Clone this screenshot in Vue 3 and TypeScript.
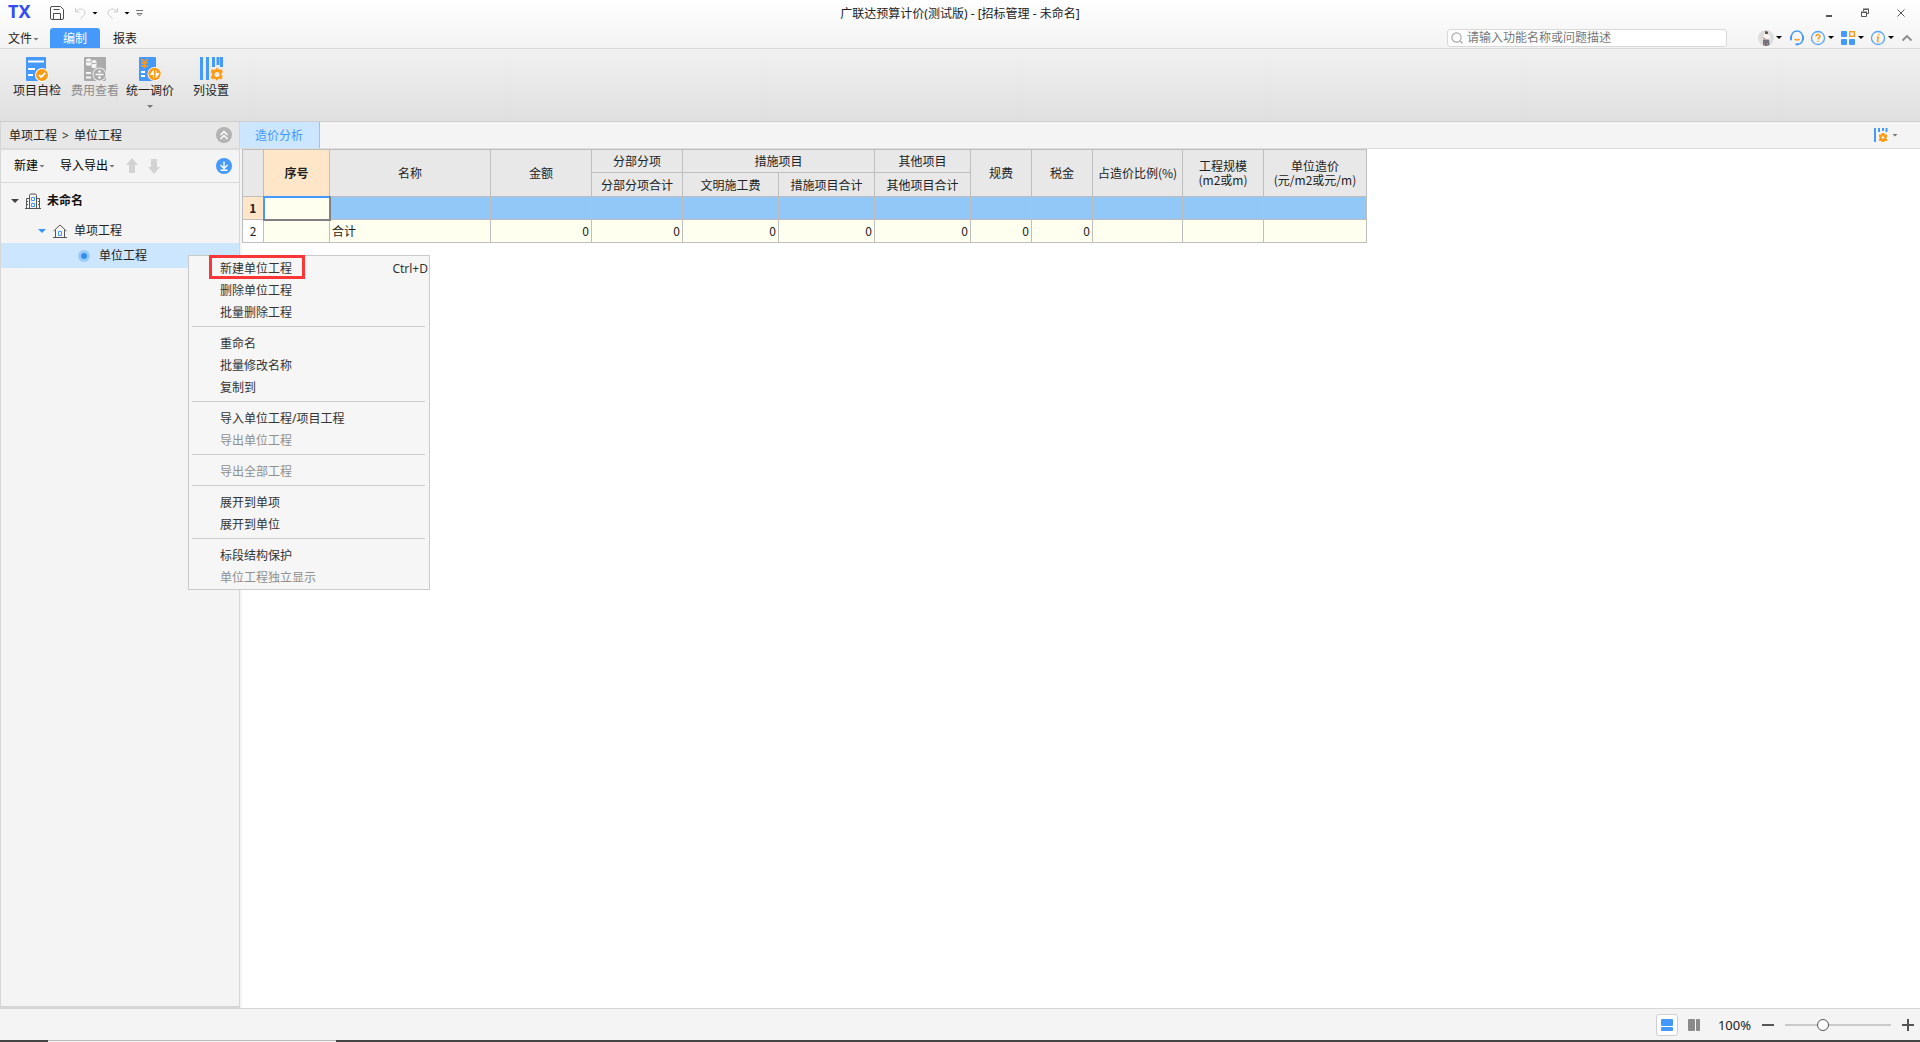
<script setup lang="ts">
import { ref } from 'vue'

interface MenuItem {
  label: string
  shortcut?: string
  disabled?: boolean
  marked?: boolean
}

const menuGroups: MenuItem[][] = [
  [
    { label: '新建单位工程', shortcut: 'Ctrl+D', marked: true },
    { label: '删除单位工程' },
    { label: '批量删除工程' },
  ],
  [{ label: '重命名' }, { label: '批量修改名称' }, { label: '复制到' }],
  [{ label: '导入单位工程/项目工程' }, { label: '导出单位工程', disabled: true }],
  [{ label: '导出全部工程', disabled: true }],
  [{ label: '展开到单项' }, { label: '展开到单位' }],
  [{ label: '标段结构保护' }, { label: '单位工程独立显示', disabled: true }],
]

const columnWidths: number[] = [21, 66, 161, 101, 91, 96, 96, 96, 61, 61, 90, 81, 103]
const totals: string[] = ['', '合计', '0', '0', '0', '0', '0', '0', '0', '', '', '']
const keyword = ref('')
const zoom = ref(34)
</script>

<template>
  <div class="app">
    <header class="top">
      <div class="title-row">
        <div class="quick">
          <span class="logo">TX</span>
          <button class="icon-btn save" aria-label="保存">
            <svg width="14" height="14" viewBox="0 0 14 14" fill="none" stroke="#4a4a4a">
              <path d="M2 .5h8.500l3 3V12a1.500 1.500 0 0 1-1.500 1.500H2A1.500 1.500 0 0 1 .5 12V2A1.500 1.500 0 0 1 2 .5zM3.500 13.500v-6h7v6M3.500 3.500h6" />
            </svg>
          </button>
          <button class="icon-btn undo" aria-label="撤销">
            <svg width="12" height="12" viewBox="0 0 12 12" fill="none" stroke="#cdcdcd">
              <path d="M1.500 1v4h4M1.500 5C4 1 10.500 1 11 5.500c0 3-2.500 3.500-4.500 6" />
            </svg>
          </button>
          <i class="tri black"></i>
          <button class="icon-btn redo" aria-label="恢复">
            <svg width="12" height="12" viewBox="0 0 12 12" fill="none" stroke="#cdcdcd">
              <path d="M10.500 1v4h-4M10.500 5C8 1 1.500 1 1 5.500c0 3 2.500 3.500 4.500 6" />
            </svg>
          </button>
          <i class="tri black"></i>
          <button class="icon-btn more" aria-label="自定义">
            <svg width="7" height="8" viewBox="0 0 7 8" fill="none" stroke="#777">
              <path d="M0 1.500h7M1 4.500l2.500 2.500L6 4.500z" />
            </svg>
          </button>
        </div>
        <h1 class="title">广联达预算计价(测试版) - [招标管理 - 未命名]</h1>
        <div class="window-btns">
          <button class="icon-btn" aria-label="最小化">
            <svg width="12" height="12" viewBox="0 0 12 12"><path d="M3 8h6v2H3z" fill="#555" /></svg>
          </button>
          <button class="icon-btn" aria-label="还原">
            <svg width="12" height="12" viewBox="0 0 12 12" fill="none" stroke="#555">
              <path d="M2.500 5.500h5v4h-5zM2 5h6M4.500 4V2.500h5v4H8M4 2h6" />
            </svg>
          </button>
          <button class="icon-btn" aria-label="关闭">
            <svg width="12" height="12" viewBox="0 0 12 12" stroke="#555"><path d="M2.500 2.500l7 7M9.500 2.500l-7 7" /></svg>
          </button>
        </div>
      </div>
      <div class="tab-row">
        <nav class="tabs">
          <button class="tab file">文件<i class="tri grey"></i></button>
          <button class="tab active">编制</button>
          <button class="tab report">报表</button>
        </nav>
        <div class="tools">
          <label class="search">
            <svg width="12" height="12" viewBox="0 0 12 12" fill="none" stroke="#aaa" stroke-width="1.200">
              <circle cx="5.500" cy="5.500" r="4.600" /><path d="M9 9l2.500 2.500" />
            </svg>
            <input v-model="keyword" type="text" aria-label="搜索" placeholder="请输入功能名称或问题描述" />
          </label>
          <button class="tool" aria-label="账户">
            <svg width="16" height="16" viewBox="0 0 16 16">
              <circle cx="8" cy="8" r="8" fill="#dedede" />
              <path d="M7 1.500h3v3l2 1.500v4l-1 .5H6L4 8l2-3z" fill="#f8f3f1" />
              <path d="M7 1.500q1.500-1 3 .5v2H7z" fill="#6b5248" />
              <path d="M5 9.500h6l.5 5.500q-4 2-6.500 0z" fill="#70707e" />
              <path d="M4.500 7.500l3 1.500M6.500 15v-2M9.500 15v-2" stroke="#b08878" />
            </svg>
            <i class="tri black"></i>
          </button>
          <button class="tool" aria-label="客服">
            <svg width="16" height="16" viewBox="0 0 16 16" fill="none" stroke="#4499fb" stroke-width="1.400">
              <path d="M3.500 6.500a5.500 5.500 0 0 1 11 0M14.500 9.500c0 3-2 4.500-5 4.700" />
              <path d="M3 6.500v3M15 6.500v3" stroke-width="2" stroke-linecap="round" />
              <path d="M7.500 14.300h3" stroke-width="2" />
              <path d="M6.500 9q2.500 2 5 0" stroke="#ff9a1f" />
            </svg>
          </button>
          <button class="tool" aria-label="帮助">
            <svg width="16" height="16" viewBox="0 0 16 16" fill="none" stroke="#58a4fb" stroke-width="1.300">
              <circle cx="8" cy="8" r="6.500" />
              <path d="M6 6.500C6 4 10 4 10 6.300 10 7.700 8 7.700 8 9.500M8 10.800V12" stroke="#ff9a1f" stroke-width="1.500" />
            </svg>
            <i class="tri black"></i>
          </button>
          <button class="tool" aria-label="应用">
            <svg width="16" height="16" viewBox="0 0 16 16" fill="#4499fb">
              <rect x="1" y="1" width="6" height="6" rx="1" /><rect x="1" y="9" width="6" height="6" rx="1" />
              <rect x="9" y="9" width="6" height="6" rx="1" />
              <rect x="9.700" y="1.700" width="4.600" height="4.600" fill="none" stroke="#ff9a1f" stroke-width="1.400" />
            </svg>
            <i class="tri black"></i>
          </button>
          <button class="tool" aria-label="关于">
            <svg width="16" height="16" viewBox="0 0 16 16" fill="none" stroke="#58a4fb" stroke-width="1.300">
              <circle cx="8" cy="8" r="6.500" />
              <path d="M9 3.800L8.700 5.300M8.300 6.700L7.400 11.800M6.800 6.900h1.500M7.300 11.800h1.400" stroke="#ff9a1f" stroke-width="1.500" />
            </svg>
            <i class="tri black"></i>
          </button>
          <button class="tool fold" aria-label="收起功能区">
            <svg width="14" height="10" viewBox="0 0 14 10" fill="none" stroke="#8a8a8a" stroke-width="1.800"><path d="M2.500 7.500L7 3l4.500 4.500" /></svg>
          </button>
        </div>
      </div>
    </header>

    <section class="ribbon">
      <button class="cmd">
        <svg width="24" height="26" viewBox="0 0 24 26">
          <path d="M2 1h18v24H2a1 1 0 0 1-1-1V2a1 1 0 0 1 1-1zM20 1a1 1 0 0 1 1 1v22h-1z" fill="#4499fb" />
          <path d="M3 5.500h16M3 13h7M3 19h5" stroke="#fff" stroke-width="2" />
          <circle cx="17" cy="19" r="7" fill="#fff" /><circle cx="17" cy="19" r="6" fill="#ff9a12" />
          <path d="M14 19l2.200 2.200 4-4.400" fill="none" stroke="#fff" stroke-width="1.800" />
        </svg>
        <span>项目自检</span>
      </button>
      <button class="cmd" disabled>
        <svg width="24" height="26" viewBox="0 0 24 26">
          <rect x="1" y="1" width="22" height="24" rx="1" fill="#ababab" />
          <path d="M3 3.500q3-2 5 0V9q-2 1.500-5 0zM8.500 5q3-2 5 0v6.500q-2.500 1.500-5 0z" fill="#f5f5f5" />
          <path d="M3 17h5M3 21.500h5" stroke="#f5f5f5" stroke-width="2" />
          <path d="M3 5.500q2.500 1.200 5 0M8.500 7q2.500 1.200 5 0" stroke="#ababab" fill="none" />
          <circle cx="16.500" cy="18.500" r="7" fill="#eee" /><circle cx="16.500" cy="18.500" r="6" fill="#ababab" />
          <path d="M12.500 18.500h8" stroke="#fff" stroke-width="1.500" /><circle cx="16.500" cy="15.500" r="1.200" fill="#fff" /><circle cx="16.500" cy="21.500" r="1.200" fill="#fff" />
        </svg>
        <span>费用查看</span>
      </button>
      <button class="cmd narrow">
        <svg width="24" height="26" viewBox="0 0 24 26">
          <rect x="1" y="1" width="17" height="24" rx="1" fill="#4499fb" />
          <path d="M3.500 3l3 3.500 3-3.500M3 7h7M3 10h7M6.500 6v6" fill="none" stroke="#ff9a12" stroke-width="1.600" />
          <path d="M3 16h4M3 20h4" stroke="#fff" stroke-width="2" />
          <circle cx="16.500" cy="18" r="7" fill="#fff" /><circle cx="16.500" cy="18" r="6.200" fill="#ff9a12" />
          <path d="M15.500 14.500v7M15.500 14.500l-3 4h3M18 21.500v-7M18 21.500l3-4h-3" fill="#fff" stroke="#fff" />
        </svg>
        <span>统一调价</span>
        <i class="tri grey"></i>
      </button>
      <button class="cmd wide">
        <svg width="24" height="26" viewBox="0 0 24 26">
          <path d="M2.500 1v23M8.500 1v23M14.500 1v10M19 1v8M22.500 1v10" stroke="#4499fb" stroke-width="3" />
          <path d="M18 11.500l2 2 3-.5 1 3-1.500 2 1.500 3-1.500 2.500-3-.5-1.500 2-2-2-3 .5L11.500 21l1.500-2.500-1.500-3 1.500-2.500 3 .5z" fill="#ff9a12" stroke="#eee" stroke-width=".5" />
          <circle cx="18" cy="18.500" r="2.500" fill="#eee" />
        </svg>
        <span>列设置</span>
      </button>
    </section>

    <main class="body">
      <aside class="side">
        <div class="crumb">
          <span class="path"><span>单项工程</span><span>&gt;</span><span>单位工程</span></span>
          <button class="icon-btn" aria-label="收起">
            <svg width="16" height="16" viewBox="0 0 16 16" fill="none" stroke="#fff" stroke-width="1.500">
              <circle cx="8" cy="8" r="8" fill="#b3b3b3" stroke="none" /><path d="M4.500 8L8 4.500 11.500 8M4.500 12L8 8.500l3.500 3.500" />
            </svg>
          </button>
        </div>
        <div class="side-tools">
          <button class="text-btn">新建<i class="tri grey"></i></button>
          <button class="text-btn">导入导出<i class="tri grey"></i></button>
          <button class="icon-btn arrow" aria-label="上移">
            <svg width="12" height="16" viewBox="0 0 12 16" fill="#d3d3d3"><path d="M6 0l6 7H9v8H3V7H0z" /></svg>
          </button>
          <button class="icon-btn arrow" aria-label="下移">
            <svg width="12" height="16" viewBox="0 0 12 16" fill="#d3d3d3"><path d="M6 16L0 9h3V1h6v8h3z" /></svg>
          </button>
          <button class="icon-btn load" aria-label="下载">
            <svg width="16" height="16" viewBox="0 0 16 16" fill="none" stroke="#fff" stroke-width="1.400">
              <circle cx="8" cy="8" r="8" fill="#4499fb" stroke="none" /><path d="M8 3.500V10M4.500 7L8 10.500 11.500 7M4.500 12.300h7" />
            </svg>
          </button>
        </div>
        <ul class="tree">
          <li class="node root">
            <i class="tri big"></i>
            <svg width="16" height="16" viewBox="0 0 16 16" fill="none" stroke="#555">
              <path d="M4.500 15V2.500q0-1.500 1.500-1.500h4q1.500 0 1.500 1.500V15M4 5.500H1.500v10M12 5.500h2.500v10M0 15.500h16M2 8.500h1M2 11.500h1M13 8.500h1M13 11.500h1" />
              <path d="M6.500 4.500h3v3h-3zM6.500 10.500h3v3h-3z" stroke="#4499fb" />
            </svg>
            <span>未命名</span>
          </li>
          <li class="node group">
            <i class="tri big blue"></i>
            <svg width="14" height="14" viewBox="0 0 14 14" fill="none" stroke="#555">
              <path d="M.5 7L7 1l6.500 6M2.500 6v7.500M11.500 6v7.500M0 13.500h14" /><path d="M5.500 7.500h3v4h-3z" stroke="#4499fb" />
            </svg>
            <span>单项工程</span>
          </li>
          <li class="node leaf">
            <svg width="12" height="12" viewBox="0 0 12 12"><circle cx="6" cy="6" r="6" fill="#9acbfa" /><circle cx="6" cy="6" r="3" fill="#318ff2" /></svg>
            <span>单位工程</span>
          </li>
        </ul>
      </aside>

      <section class="content">
        <div class="sheet-tabs">
          <button class="sheet-tab">造价分析</button>
          <button class="icon-btn columns" aria-label="列设置">
            <svg width="14" height="16" viewBox="0 0 14 16">
              <path d="M1 1v14M5 1v4M9 1v3M12.500 1v4" stroke="#4499fb" stroke-width="2" />
              <path d="M7.500 6h3v1.500H13v3h-1v1h1v2.500h-2.500v1h-3v-1H5v-2.500h1v-1H5v-3h2.500z" fill="#ff9a12" /><circle cx="9" cy="10.500" r="1.200" fill="#fff" />
            </svg>
            <i class="tri grey"></i>
          </button>
        </div>
        <div class="sheet">
          <table class="grid">
            <colgroup><col v-for="(w, i) in columnWidths" :key="i" :style="{ width: w + 'px' }" /></colgroup>
            <thead>
              <tr>
                <th rowspan="2"></th>
                <th rowspan="2" class="current">序号</th>
                <th rowspan="2">名称</th>
                <th rowspan="2">金额</th>
                <th>分部分项</th>
                <th colspan="2">措施项目</th>
                <th>其他项目</th>
                <th rowspan="2">规费</th>
                <th rowspan="2">税金</th>
                <th rowspan="2">占造价比例(%)</th>
                <th rowspan="2">工程规模<br />(m2或m)</th>
                <th rowspan="2">单位造价<br />(元/m2或元/m)</th>
              </tr>
              <tr class="sub">
                <th>分部分项合计</th>
                <th>文明施工费</th>
                <th>措施项目合计</th>
                <th>其他项目合计</th>
              </tr>
            </thead>
            <tbody>
              <tr class="picked">
                <th class="current">1</th>
                <td class="cursor"></td>
                <td v-for="n in 11" :key="n"></td>
              </tr>
              <tr>
                <th class="num">2</th>
                <td v-for="(v, i) in totals" :key="i" :class="{ left: i === 1 }">{{ v }}</td>
              </tr>
            </tbody>
          </table>
        </div>
      </section>

      <div class="menu" role="menu">
        <div v-for="(group, g) in menuGroups" :key="g" class="menu-group">
          <button
            v-for="item in group"
            :key="item.label"
            class="menu-item"
            :class="{ marked: item.marked }"
            role="menuitem"
            :disabled="item.disabled"
          >
            <span>{{ item.label }}</span>
            <span v-if="item.shortcut">{{ item.shortcut }}</span>
          </button>
        </div>
      </div>
    </main>

    <footer class="status">
      <button class="view on" aria-label="上下视图">
        <svg width="12" height="12" viewBox="0 0 12 12" fill="#4499fb"><rect width="12" height="7" rx="1" /><rect y="8" width="12" height="4" rx="1" /></svg>
      </button>
      <button class="view" aria-label="左右视图">
        <svg width="12" height="12" viewBox="0 0 12 12" fill="#8a8a8a"><rect width="7" height="12" rx="1" /><rect x="8" width="4" height="12" rx="1" /></svg>
      </button>
      <span class="percent">100%</span>
      <button class="icon-btn" aria-label="缩小">
        <svg width="12" height="12" viewBox="0 0 12 12"><path d="M0 5h12v2H0z" fill="#555" /></svg>
      </button>
      <input v-model="zoom" class="slider" type="range" min="0" max="100" aria-label="缩放" />
      <button class="icon-btn" aria-label="放大">
        <svg width="12" height="12" viewBox="0 0 12 12"><path d="M0 5h5V0h2v5h5v2H7v5H5V7H0z" fill="#555" /></svg>
      </button>
    </footer>
    <div class="taskbar"><i></i></div>
  </div>
</template>

<style>
body {
  margin: 0;
}
</style>

<style scoped>
.app {
  display: flex;
  flex-direction: column;
  min-height: 100vh;
  background: #f4f4f4;
  color: #222;
  font: 12px/18px 'Noto Sans', 'Noto Sans CJK SC', sans-serif;
}
.app *,
.app *::before,
.app *::after {
  box-sizing: border-box;
}
button {
  display: flex;
  align-items: center;
  padding: 0;
  border: 0;
  background: none;
  color: inherit;
  font: inherit;
  white-space: nowrap;
}
svg {
  display: block;
  flex: none;
}
.tri {
  flex: none;
  width: 6px;
  height: 3px;
  background: #777;
  clip-path: polygon(0 0, 100% 0, 50% 100%);
}
.tri.black {
  background: #000;
}
.tri.big {
  width: 8px;
  height: 4px;
  background: #444;
}
.tri.blue {
  background: #3b93fa;
}

.top {
  background: linear-gradient(#fff, #f3f3f3);
  border-bottom: 1px solid #d9d9d9;
}
.title-row {
  display: grid;
  grid-template-columns: 1fr auto 1fr;
  align-items: center;
  height: 26px;
}
.quick {
  display: flex;
  align-items: center;
  height: 24px;
  padding-left: 8px;
}
.logo {
  width: 42px;
  height: 22px;
  color: #344cf5;
  font: bold 18px/18px 'Noto Sans', sans-serif;
}
.undo {
  margin: 0 6px 0 10px;
}
.redo {
  margin: 0 5px 0 9px;
}
.more {
  margin-left: 6px;
}
.title {
  margin: 0;
  padding-top: 2px;
  font-size: 12px;
  font-weight: normal;
}
.window-btns {
  display: flex;
  justify-content: flex-end;
  gap: 24px;
  padding-right: 13px;
}
.tab-row {
  display: flex;
  align-items: flex-end;
  justify-content: space-between;
  height: 22px;
}
.tabs {
  display: flex;
}
.tab {
  justify-content: center;
  width: 50px;
  height: 20px;
  padding-top: 2px;
}
.tab.file {
  justify-content: flex-start;
  gap: 1px;
  padding-left: 8px;
}
.tab.active {
  border-radius: 3px 3px 0 0;
  background: #4499fb;
  color: #fff;
}
.tools {
  display: flex;
  align-items: center;
  gap: 6px;
  height: 22px;
  padding: 1px 6px 0 0;
}
.search {
  display: flex;
  align-items: center;
  gap: 4px;
  width: 280px;
  height: 18px;
  margin-right: 25px;
  padding-left: 3px;
  border: 1px solid #d9d9d9;
  border-radius: 3px;
  background: #fff;
}
.search input {
  flex: 1;
  min-width: 0;
  height: 16px;
  padding: 0;
  border: 0;
  outline: 0;
  background: none;
  color: #555;
  font: inherit;
}
.search input::placeholder {
  color: #777;
}
.tool {
  gap: 2px;
}

.ribbon {
  display: flex;
  align-items: flex-start;
  height: 73px;
  padding: 7px 8px 0;
  border-bottom: 1px solid #cdcdcd;
  background: linear-gradient(#f1f1f1, #dfdfdf);
}
.cmd {
  flex-direction: column;
  padding: 0 5px;
}
.cmd.narrow {
  padding: 0 2px;
}
.cmd.wide {
  padding: 0 17px;
}
.cmd .tri {
  margin-top: 5px;
}
.cmd:disabled {
  color: #8c8c8c;
}

.body {
  position: relative;
  display: flex;
  flex: 1;
}
.side {
  width: 240px;
  border: 1px solid #d6d6d6;
  border-width: 0 1px 2px;
}
.crumb,
.side-tools {
  display: flex;
  align-items: center;
  padding: 0 7px 0 8px;
}
.crumb {
  justify-content: space-between;
  height: 28px;
  border-bottom: 2px solid #dcdcdc;
  background: #e7e7e7;
}
.path {
  display: flex;
  gap: 5px;
  padding-top: 2px;
}
.side-tools {
  height: 33px;
  padding-left: 13px;
  border-bottom: 1px solid #d9d9d9;
}
.text-btn {
  margin-right: 15px;
  color: #000;
}
.text-btn + .icon-btn {
  margin-left: -4px;
}
.text-btn .tri {
  margin-left: 1px;
}
.arrow {
  margin-right: 10px;
}
.load {
  margin-left: auto;
}
.tree {
  margin: 0;
  padding: 0;
  list-style: none;
}
.node {
  display: flex;
  align-items: center;
}
.root {
  gap: 6px;
  height: 36px;
  padding-left: 10px;
  color: #111;
  font-weight: bold;
}
.group {
  gap: 7px;
  height: 24px;
  padding-left: 37px;
}
.leaf {
  gap: 9px;
  height: 25px;
  padding-left: 77px;
  background: #cbe6fe;
}

.content {
  flex: 1;
  min-width: 0;
  display: flex;
  flex-direction: column;
}
.sheet-tabs {
  display: flex;
  justify-content: space-between;
  height: 27px;
  border-bottom: 1px solid #dcdcdc;
}
.sheet-tab {
  justify-content: center;
  width: 80px;
  padding: 2px 1px 0 0;
  border-right: 1px solid #bbb;
  background: #cbe6fe;
  color: #3f97fb;
}
.columns {
  gap: 4px;
  padding-right: 22px;
}
.sheet {
  flex: 1;
  margin-left: 2px;
  background: #fff;
}
.grid {
  width: 1125px;
  table-layout: fixed;
  border-collapse: collapse;
  font-family: 'Noto Sans CJK SC', sans-serif;
  line-height: 14px;
}
.grid th,
.grid td {
  height: 23px;
  padding: 0;
  border: 1px solid #bebebe;
}
.grid .sub th {
  height: 24px;
}
.grid th {
  background: #e8e8e8;
  font-weight: normal;
}
.grid td {
  padding: 0 2px;
  background: #ffffef;
  text-align: right;
}
.grid .left {
  text-align: left;
}
.grid th.num {
  background: #fff;
}
.grid th.current {
  background: #ffe6c8;
  font-weight: bold;
}
.grid .picked td {
  background: #92c8f7;
}
.grid .picked td.cursor {
  border: 2px solid #808080;
  border-top-color: #4499fb;
  border-left-color: #4499fb;
  background: #ffffef;
}

.menu {
  position: absolute;
  top: 133px;
  left: 188px;
  width: 242px;
  padding-top: 2px;
  border: 1px solid #cacaca;
  background: #f6f6f6;
  color: #333;
}
.menu-group + .menu-group::before {
  content: '';
  display: block;
  height: 1px;
  margin: 2px 4px 6px 3px;
  background: #cdcdcd;
}
.menu-item {
  position: relative;
  justify-content: space-between;
  width: 100%;
  height: 22px;
  padding: 0 1px 0 31px;
}
.menu-item:disabled {
  color: #8f8f8f;
}
.menu-item.marked::after {
  content: '';
  position: absolute;
  top: -3px;
  left: 20px;
  width: 96px;
  height: 24px;
  border: 3px solid #fa3636;
}

.status {
  display: flex;
  align-items: center;
  justify-content: flex-end;
  height: 32px;
  padding-right: 6px;
  border-top: 1px solid #d6d6d6;
}
.view {
  justify-content: center;
  width: 22px;
  height: 22px;
  margin-right: 5px;
  border-radius: 3px;
}
.view.on {
  border: 1px solid #cfcfcf;
  background: #fff;
}
.percent {
  margin: 0 11px 0 8px;
  font-size: 13px;
}
.slider {
  width: 106px;
  height: 12px;
  margin: 0 11px;
  appearance: none;
  background: linear-gradient(#c9c9c9, #c9c9c9) center / 100% 2px no-repeat;
}
.slider::-webkit-slider-thumb {
  appearance: none;
  width: 12px;
  height: 12px;
  border: 1px solid #555;
  border-radius: 50%;
  background: #fff;
}
.taskbar {
  display: flex;
  height: 2px;
  padding-left: 48px;
  background: #444;
}
.taskbar i {
  width: 288px;
  border-top: 1px solid #bbb;
  background: #f4f4f4;
}
</style>
